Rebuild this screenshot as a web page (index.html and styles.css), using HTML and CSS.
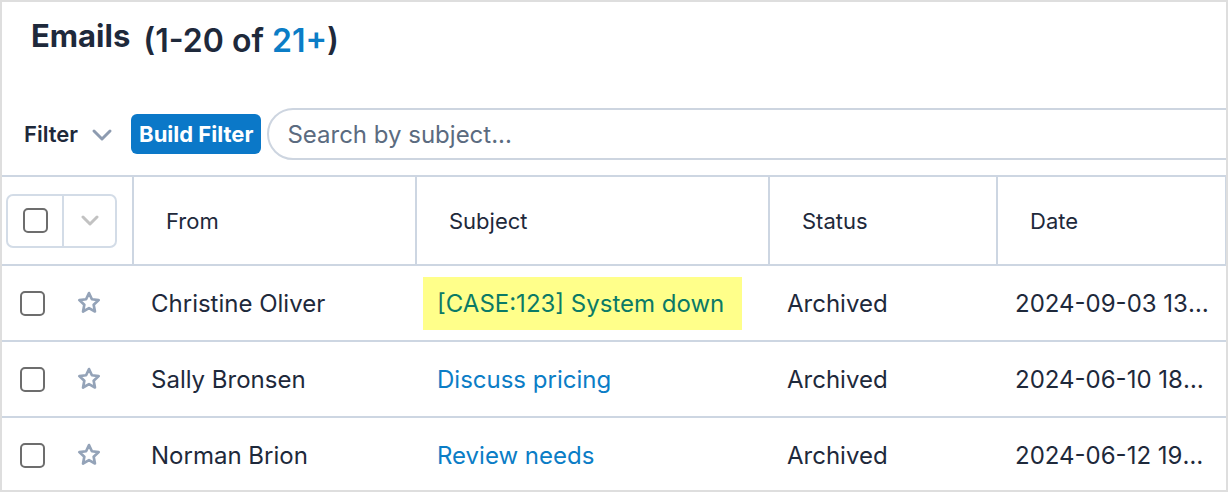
FILE: index.html
```html
<!DOCTYPE html>
<html>
<head>
<meta charset="utf-8">
<link rel="stylesheet" href="styles.css">
</head>
<body>
<div class="frame">
  <div class="title">
    <h1 class="title-main">Emails</h1>
    <span class="title-count">(1-20 of <span class="accent">21+</span>)</span>
  </div>
  <div class="filter-row">
    <span class="filter-label">Filter</span>
    <svg class="filter-chevron" width="22" height="14" viewBox="0 0 22 14"><path d="M3 3 L11 11 L19 3" fill="none" stroke="#8d9bb0" stroke-width="3" stroke-linecap="round" stroke-linejoin="round"/></svg>
    <button class="build-btn">Build Filter</button>
    <div class="search">Search by subject...</div>
  </div>
  <table class="grid">
    <colgroup>
      <col class="c1"><col class="c2"><col class="c3"><col class="c4"><col class="c5">
    </colgroup>
    <thead>
      <tr>
        <th class="sel-th">
          <div class="sel-group">
            <span class="sel-box"><span class="cb"></span></span>
            <span class="sel-drop"><svg width="20" height="12" viewBox="0 0 20 12"><path d="M3 2 L10 9 L17 2" fill="none" stroke="#c2c2c2" stroke-width="3" stroke-linecap="round" stroke-linejoin="round"/></svg></span>
          </div>
        </th>
        <th>From</th>
        <th>Subject</th>
        <th>Status</th>
        <th>Date</th>
      </tr>
    </thead>
    <tbody>
      <tr>
        <td class="sel-td"><div class="sel-cell"><span class="cb"></span><svg class="star" width="28" height="28" viewBox="0 0 24 24"><path d="M12 3.5l2.5 5.3 5.8.7-4.3 4 1.1 5.8L12 16.4l-5.1 2.9 1.1-5.8-4.3-4 5.8-.7z" fill="none" stroke="#94a3b8" stroke-width="2.3" stroke-linejoin="round"/></svg></div></td>
        <td>Christine Oliver</td>
        <td class="subj-td"><span class="hl">[CASE:123] System down</span></td>
        <td>Archived</td>
        <td class="date">2024-09-03 13:42</td>
      </tr>
      <tr>
        <td class="sel-td"><div class="sel-cell"><span class="cb"></span><svg class="star" width="28" height="28" viewBox="0 0 24 24"><path d="M12 3.5l2.5 5.3 5.8.7-4.3 4 1.1 5.8L12 16.4l-5.1 2.9 1.1-5.8-4.3-4 5.8-.7z" fill="none" stroke="#94a3b8" stroke-width="2.3" stroke-linejoin="round"/></svg></div></td>
        <td>Sally Bronsen</td>
        <td class="subj-td"><span class="link">Discuss pricing</span></td>
        <td>Archived</td>
        <td class="date">2024-06-10 18:05</td>
      </tr>
      <tr>
        <td class="sel-td"><div class="sel-cell"><span class="cb"></span><svg class="star" width="28" height="28" viewBox="0 0 24 24"><path d="M12 3.5l2.5 5.3 5.8.7-4.3 4 1.1 5.8L12 16.4l-5.1 2.9 1.1-5.8-4.3-4 5.8-.7z" fill="none" stroke="#94a3b8" stroke-width="2.3" stroke-linejoin="round"/></svg></div></td>
        <td>Norman Brion</td>
        <td class="subj-td"><span class="link">Review needs</span></td>
        <td>Archived</td>
        <td class="date">2024-06-12 19:30</td>
      </tr>
    </tbody>
  </table>
</div>
</body>
</html>
```
FILE: styles.css
```css
* { box-sizing: border-box; }
html, body { margin: 0; padding: 0; background: #fff; }
body { font-family: Inter, "Noto Sans", sans-serif; color: #1e293b; }

.frame {
  width: 1228px;
  height: 492px;
  border: 2px solid #dedede;
  overflow: hidden;
  background: #fff;
}

.title {
  display: flex;
  align-items: flex-start;
  padding: 15px 0 0 29px;
  height: 68px;
}
.title-main {
  margin: 0;
  font-size: 31px;
  font-weight: 700;
  line-height: 38px;
  color: #1e293b;
}
.title-count {
  margin-left: 13px;
  padding-top: 5px;
  font-size: 32px;
  font-weight: 600;
  line-height: 38px;
}
.accent { color: #0b7dc6; }

.filter-row {
  display: flex;
  align-items: center;
  height: 52px;
  margin-top: 38px;
  padding-left: 22px;
}
.filter-label {
  flex-shrink: 0;
  font-size: 22px;
  font-weight: 600;
  color: #1e293b;
}
.filter-chevron { flex-shrink: 0; margin-left: 13px; margin-top: 2px; }
.build-btn {
  flex-shrink: 0;
  white-space: nowrap;
  margin-left: 18px;
  height: 40px;
  padding: 0 8px;
  border: none;
  border-radius: 6px;
  background: #0b78c8;
  color: #fff;
  font-family: Inter, "Noto Sans", sans-serif;
  font-size: 22px;
  font-weight: 700;
}
.search {
  flex: 0 0 1100px;
  margin-left: 6px;
  height: 52px;
  border: 2px solid #cdd5e0;
  border-radius: 26px;
  padding-left: 18px;
  display: flex;
  align-items: center;
  font-size: 24px;
  color: #5b6b80;
  white-space: nowrap;
}

.grid {
  margin-top: 15px;
  width: 1224px;
  table-layout: fixed;
  border-collapse: collapse;
  border-top: 2px solid #cdd6e2;
}
.c1 { width: 131px; }
.c2 { width: 283px; }
.c3 { width: 353px; }
.c4 { width: 228px; }
.c5 { width: 229px; }

th {
  height: 89px;
  text-align: left;
  font-weight: 400;
  font-size: 22px;
  padding: 0 0 0 32px;
  border-right: 2px solid #cdd6e2;
  border-bottom: 2px solid #cdd6e2;
  color: #1e293b;
}
th.sel-th { padding: 0 0 0 4px; }

.sel-group {
  display: flex;
  width: 111px;
  height: 54px;
  border: 2px solid #d3dce7;
  border-radius: 7px;
}
.sel-box {
  width: 56px;
  display: flex;
  align-items: center;
  justify-content: center;
  border-right: 2px solid #d3dce7;
}
.sel-drop {
  flex: 1;
  display: flex;
  align-items: center;
  justify-content: center;
}

.cb {
  display: inline-block;
  width: 25px;
  height: 25px;
  border: 2px solid #6d6d6d;
  border-radius: 5px;
  background: #fff;
}

td {
  height: 76px;
  font-size: 24px;
  padding: 0 0 0 18px;
  border-bottom: 2px solid #cdd6e2;
  white-space: nowrap;
  overflow: hidden;
  text-overflow: ellipsis;
  color: #1e293b;
}
td.sel-td { padding: 0 0 0 18px; }
.sel-cell { display: flex; align-items: center; }
.star { margin-left: 30px; }

td.subj-td { padding-left: 7px; }
.hl {
  display: inline-block;
  background: #ffff8a;
  color: #0b7a66;
  padding: 14px 18px 14px 14px;
  line-height: 25px;
}
.link { color: #0b7dc6; padding-left: 14px; }
td.date { padding-right: 16px; }
```
